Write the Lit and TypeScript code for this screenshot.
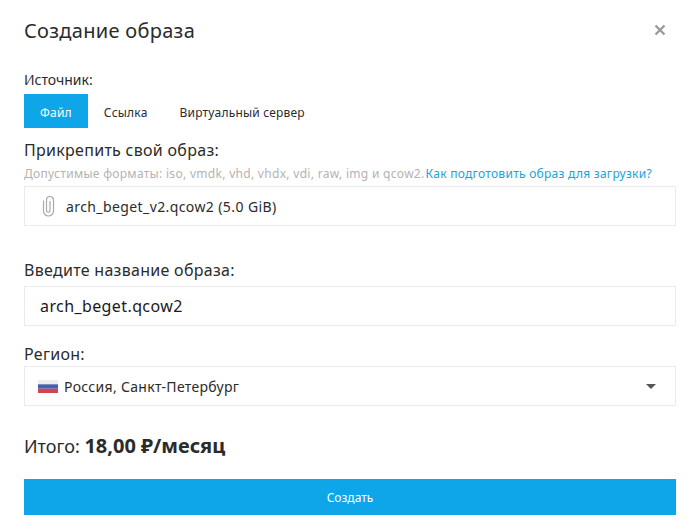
import { LitElement, html, css } from "lit";
import { customElement } from "lit/decorators.js";

@customElement("app-root")
export class AppRoot extends LitElement {
  static styles = css`
    :host { display: block; width: 700px; height: 529px; background: #fff; font-family: "Noto Sans", sans-serif; color: #2b2b2b; overflow: hidden; }
    .modal { display: flex; flex-direction: column; padding: 17px 24px 0; box-sizing: border-box; }
    .head { display: flex; justify-content: space-between; align-items: center; height: 28px; }
    h1 { margin: 0; font-size: 20px; font-weight: 400; line-height: 28px; letter-spacing: .3px; }
    .close { width: 12px; height: 12px; margin: 0 10px 2px 0; display: block; }
    .src { font-size: 14px; line-height: 20px; margin-top: 25px; }
    .tabs { display: flex; margin-top: 4px; height: 34px; }
    .tab { font-size: 12px; letter-spacing: .2px; display: flex; align-items: center; padding: 3px 16px 0; }
    .tab.on { background: #0fa5e9; color: #fff; }
    .label { font-size: 16px; line-height: 20px; letter-spacing: .29px; }
    .attach { margin-top: 12px; }
    .hint { font-size: 12px; line-height: 16px; letter-spacing: .3px; color: #b3b3b3; margin-top: 6px; white-space: nowrap; }
    .hint a { color: #1ba3d8; text-decoration: none; margin-left: 1px; letter-spacing: .27px; }
    .box { border: 1px solid #ebebeb; box-sizing: border-box; height: 40px; display: flex; align-items: center; }
    .file { margin-top: 4px; padding-left: 15px; font-size: 14px; letter-spacing: .4px; gap: 10px; }
    .name-label { margin-top: 34px; }
    .name { margin-top: 6px; padding-left: 15px; font-size: 16px; letter-spacing: .4px; color: #1a1a1a; }
    .region-label { margin-top: 18px; }
    .region { margin-top: 2px; padding: 0 19px 0 13px; font-size: 14px; letter-spacing: .31px; gap: 6px; }
    .region span { flex: 1; }
    .flag { display: block; }
    .total { margin-top: 27px; font-size: 18px; line-height: 26px; height: 26px; }
    .total b { font-weight: 700; font-size: 20px; }
    .btn { margin-top: 20px; height: 36px; background: #0fa5e9; color: #fff; font-size: 12px; display: flex; align-items: center; justify-content: center; }
  `;

  render() {
    return html`
      <div class="modal">
        <div class="head">
          <h1>Создание образа</h1>
          <svg class="close" viewBox="0 0 12 12"><path d="M1.5 1.5l9 9M10.5 1.5l-9 9" stroke="#9a9aa3" stroke-width="2.4" fill="none"/></svg>
        </div>
        <div class="src">Источник:</div>
        <div class="tabs">
          <div class="tab on">Файл</div>
          <div class="tab">Ссылка</div>
          <div class="tab">Виртуальный сервер</div>
        </div>
        <div class="label attach">Прикрепить свой образ:</div>
        <div class="hint">Допустимые форматы: iso, vmdk, vhd, vhdx, vdi, raw, img и qcow2.<a>Как подготовить образ для загрузки?</a></div>
        <div class="box file">
          <svg width="16" height="22" viewBox="0 0 16 22"><path d="M3.5 5.5V16a5 5 0 0 0 10 0V5a3.5 3.5 0 0 0-7 0V15.5a1.75 1.75 0 0 0 3.5 0V6" stroke="#a8a8a8" stroke-width="1.2" fill="none"/></svg>
          <span>arch_beget_v2.qcow2 (5.0 GiB)</span>
        </div>
        <div class="label name-label">Введите название образа:</div>
        <div class="box name">arch_beget.qcow2</div>
        <div class="label region-label">Регион:</div>
        <div class="box region">
          <svg class="flag" width="20" height="13" viewBox="0 0 20 13"><rect width="20" height="4.3" fill="#e9ecf1"/><rect y="4.3" width="20" height="4.4" fill="#4062b4"/><rect y="8.7" width="20" height="4.3" fill="#d0454f"/></svg>
          <span>Россия, Санкт-Петербург</span>
          <svg width="10" height="5" viewBox="0 0 10 5"><path d="M0 0h10L5 5z" fill="#555"/></svg>
        </div>
        <div class="total">Итого: <b>18,00 ₽/месяц</b></div>
        <div class="btn">Создать</div>
      </div>
    `;
  }
}
